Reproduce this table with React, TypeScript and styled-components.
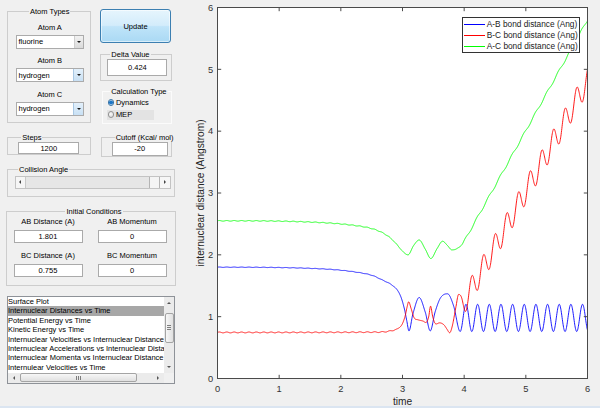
import React from 'react';
import styled, { createGlobalStyle } from 'styled-components';

const GlobalStyle = createGlobalStyle`
  html, body { margin: 0; padding: 0; background: #f0f0f0; }
  body { font-family: "Liberation Sans", Arial, sans-serif; color: #000; }
  *, *::before, *::after { box-sizing: border-box; }
`;

const Window = styled.div`
  display: flex;
  width: 600px;
  height: 408px;
  overflow: hidden;
  background: #f0f0f0;
  border-bottom: 2px solid #dbe5f1;
`;

/* ---------- left control panel ---------- */

const ControlPanel = styled.div`
  flex: none;
  width: 190px;
  padding: 6.5px 0 0 6.5px;
  display: flex;
  flex-direction: column;
  font-size: 7.5px;
  line-height: 9px;
`;

const TwoColumns = styled.div<{ $gap?: number }>`
  display: grid;
  grid-template-columns: 84.5px 72px;
  column-gap: 9px;
  align-items: start;
  margin-top: ${({ $gap = 0 }) => $gap}px;
`;

const RightColumn = styled.div`
  display: flex;
  flex-direction: column;
`;

const Group = styled.fieldset<{ $pad: string; $gap?: number; $light?: boolean; $width?: number; $shift?: number }>`
  margin: ${({ $gap = 0, $shift = 0 }) => `${$gap}px 0 0 ${$shift}px`};
  padding: ${({ $pad }) => $pad};
  min-width: 0;
  width: ${({ $width }) => ($width ? `${$width}px` : 'auto')};
  border: 1px solid ${({ $light }) => ($light ? '#fbfbfb' : '#cdcdcd')};
`;

const Caption = styled.legend<{ $center?: boolean }>`
  padding: 0 1px;
  margin: ${({ $center }) => ($center ? '0 auto' : '0 0 0 3px')};
  font-size: 7.5px;
  line-height: 9px;
  white-space: nowrap;
`;

const AtomList = styled.div`
  display: flex;
  flex-direction: column;
  gap: 7.6px;
`;

const Field = styled.div<{ $gap: number }>`
  display: flex;
  flex-direction: column;
  gap: ${({ $gap }) => $gap}px;
`;

const FieldLabel = styled.div`
  text-align: center;
  line-height: 9px;
  white-space: nowrap;
`;

const Combo = styled.div`
  display: flex;
  height: 14px;
  background: #fff;
  border: 1px solid #ababab;
`;

const ComboText = styled.span`
  flex: 1;
  display: flex;
  align-items: center;
  padding-left: 2px;
`;

const ComboButton = styled.span<{ $hot?: boolean }>`
  flex: none;
  width: ${({ $hot }) => ($hot ? 10 : 9)}px;
  display: flex;
  align-items: center;
  justify-content: center;
  background: ${({ $hot }) => ($hot ? 'linear-gradient(#e3f0fb, #c8e0f4)' : 'linear-gradient(#f2f2f2, #dadada)')};
  border-left: 1px solid ${({ $hot }) => ($hot ? '#a9c8e4' : '#cfcfcf')};
`;

type Dir = 'up' | 'down' | 'left' | 'right';

const Arrow = styled.span<{ $dir: Dir; $size?: number; $color?: string }>`
  width: 0;
  height: 0;
  ${({ $dir, $size = 2.5, $color = '#1a1a1a' }) => {
    const s = $size;
    const l = s * 1.2;
    if ($dir === 'down') return `border-left:${s}px solid transparent;border-right:${s}px solid transparent;border-top:${l}px solid ${$color};`;
    if ($dir === 'up') return `border-left:${s}px solid transparent;border-right:${s}px solid transparent;border-bottom:${l}px solid ${$color};`;
    if ($dir === 'left') return `border-top:${s}px solid transparent;border-bottom:${s}px solid transparent;border-right:${l}px solid ${$color};`;
    return `border-top:${s}px solid transparent;border-bottom:${s}px solid transparent;border-left:${l}px solid ${$color};`;
  }}
`;

const UpdateButton = styled.button`
  display: block;
  width: 71px;
  height: 34px;
  margin: 2.5px 0 0;
  padding: 0;
  border: 1px solid #3c7fb1;
  border-radius: 3px;
  background: linear-gradient(180deg, #e6f5fd 0%, #d3ecfb 48%, #bfe4f9 52%, #aad9f4 100%);
  box-shadow: inset 0 0 0 1px rgba(255, 255, 255, 0.55);
  font: 7.5px "Liberation Sans", Arial, sans-serif;
  color: #000;
`;

const Edit = styled.div<{ $w: number; $h: number }>`
  width: ${({ $w }) => $w}px;
  height: ${({ $h }) => $h}px;
  display: flex;
  align-items: center;
  justify-content: center;
  background: #fff;
  border: 1px solid #aaaaaa;
`;

const RadioList = styled.div`
  display: flex;
  flex-direction: column;
  gap: 2px;
`;

const RadioRow = styled.div<{ $shaded?: boolean }>`
  display: flex;
  align-items: center;
  gap: 1.6px;
  width: 46.6px;
  height: 10px;
  padding-left: 0.6px;
  background: ${({ $shaded }) => ($shaded ? '#e3e3e3' : 'transparent')};
`;

const RadioDot = styled.span<{ $on?: boolean }>`
  flex: none;
  width: 6.5px;
  height: 6.5px;
  border-radius: 50%;
  border: 1px solid ${({ $on }) => ($on ? '#3b75a6' : '#939393')};
  background: ${({ $on }) =>
    $on
      ? 'radial-gradient(circle, #1c76c6 0 1.5px, #5fa2dc 1.9px, #e9f2fa 2.3px)'
      : 'radial-gradient(circle at 40% 40%, #fbfbfb, #d3d3d3)'};
`;

const Slider = styled.div`
  display: flex;
  width: 156px;
  height: 13px;
  border: 1px solid #c3c3c3;
  background: #e6e6e6;
`;

const SliderButton = styled.div<{ $side: 'left' | 'right' }>`
  flex: none;
  width: ${({ $side }) => ($side === 'left' ? 9.5 : 10.5)}px;
  display: flex;
  align-items: center;
  justify-content: center;
  background: #f6f6f6;
  border-right: ${({ $side }) => ($side === 'left' ? '1px solid #c9c9c9' : 'none')};
`;

const SliderTrack = styled.div`
  flex: 1;
`;

const SliderThumb = styled.div`
  flex: none;
  width: 11px;
  background: #f4f4f4;
  border-left: 1px solid #b4b4b4;
  border-right: 1px solid #b4b4b4;
`;

const ConditionsGrid = styled.div`
  display: grid;
  grid-template-columns: 69px 69px;
  column-gap: 15px;
  row-gap: 8.5px;
`;

const ListBox = styled.div`
  margin-top: 10px;
  width: 168.5px;
  height: 88px;
  border: 1px solid #8e9298;
  background: #fff;
  display: grid;
  grid-template-columns: 1fr 10px;
  grid-template-rows: 1fr 10px;
`;

const ListItems = styled.div`
  overflow: hidden;
`;

const ListItem = styled.div<{ $selected?: boolean }>`
  height: 9.4px;
  line-height: 9.4px;
  padding-left: 0.5px;
  white-space: nowrap;
  background: ${({ $selected }) => ($selected ? '#a7a7a7' : 'transparent')};
`;

const ScrollBar = styled.div<{ $vertical?: boolean }>`
  display: flex;
  flex-direction: ${({ $vertical }) => ($vertical ? 'column' : 'row')};
  background: #ebebeb;
`;

const ScrollButton = styled.div<{ $vertical?: boolean }>`
  flex: none;
  ${({ $vertical }) => ($vertical ? 'height: 12px;' : 'width: 12px;')}
  display: flex;
  align-items: center;
  justify-content: center;
`;

const ScrollTrack = styled.div<{ $vertical?: boolean }>`
  flex: 1;
  display: flex;
  flex-direction: ${({ $vertical }) => ($vertical ? 'column' : 'row')};
  padding: ${({ $vertical }) => ($vertical ? '3.7px 0.5px 0' : '0.5px 0')};
`;

const ScrollThumb = styled.div<{ $vertical?: boolean; $len: number }>`
  flex: none;
  ${({ $vertical, $len }) => ($vertical ? `height: ${$len}px;` : `width: ${$len}px;`)}
  display: flex;
  align-items: center;
  justify-content: center;
  border: 1px solid #a4a4a4;
  border-radius: 2px;
  background: ${({ $vertical }) =>
    $vertical ? 'linear-gradient(90deg, #f7f7f7, #e0e0e0)' : 'linear-gradient(180deg, #f7f7f7, #e0e0e0)'};
`;

const Grip = styled.span<{ $vertical?: boolean }>`
  ${({ $vertical }) =>
    $vertical
      ? 'width: 4px; height: 5px; background: repeating-linear-gradient(180deg, #7d7d7d 0 1px, transparent 1px 2px);'
      : 'width: 5px; height: 4px; background: repeating-linear-gradient(90deg, #7d7d7d 0 1px, transparent 1px 2px);'}
`;

const ScrollCorner = styled.div`
  background: #f0f0f0;
`;

/* ---------- plot ---------- */

const PlotArea = styled.div`
  position: relative;
  flex: 1;
`;

const Chart = styled.svg`
  display: block;
  font-family: "Liberation Sans", Arial, sans-serif;
`;

const LegendBox = styled.div`
  position: absolute;
  top: 16.5px;
  right: 20px;
  width: 118.5px;
  padding: 1px 2px 0 1.3px;
  background: #fff;
  border: 1px solid #333;
  font-size: 8.3px;
  color: #1a1a1a;
`;

const LegendRow = styled.div`
  display: flex;
  align-items: center;
  gap: 2px;
  height: 11.2px;
  white-space: nowrap;
`;

const LegendSwatch = styled.span<{ $color: string }>`
  flex: none;
  width: 21px;
  height: 1px;
  background: ${({ $color }) => $color};
`;

/* ---------- data ---------- */

const X0 = 27.5;
const X1 = 397.5;
const Y0 = 7.5;
const Y1 = 378.5;
const tToX = (t: number) => X0 + (t / 6) * (X1 - X0);
const vToY = (v: number) => Y1 - (v / 6) * (Y1 - Y0);

type Key = [number, number, number?];

const spline = (keys: Key[]) => {
  const slopes = keys.map((k, i) => {
    if (k[2] !== undefined) return k[2];
    const a = keys[Math.max(0, i - 1)];
    const b = keys[Math.min(keys.length - 1, i + 1)];
    return (b[1] - a[1]) / (b[0] - a[0]);
  });
  return (t: number) => {
    let i = 0;
    while (i < keys.length - 2 && t > keys[i + 1][0]) i++;
    const [t0, v0] = keys[i];
    const [t1, v1] = keys[i + 1];
    const h = t1 - t0;
    const s = Math.min(1, Math.max(0, (t - t0) / h));
    const s2 = s * s;
    const s3 = s2 * s;
    return (
      (2 * s3 - 3 * s2 + 1) * v0 +
      (s3 - 2 * s2 + s) * h * slopes[i] +
      (-2 * s3 + 3 * s2) * v1 +
      (s3 - s2) * h * slopes[i + 1]
    );
  };
};

const slopeOf = (f: (t: number) => number, t: number) => (f(t + 0.0005) - f(t - 0.0005)) / 0.001;

const PERIOD = 0.189;
const T_OSC = 3.935;
const RED_JOIN = 3.96;
const GREEN_JOIN = 3.99;
const phase = (t: number) => (2 * Math.PI * (t - T_OSC)) / PERIOD;
const redBase = (t: number) => 2.17 + 1.79 * (t - 4.52);
const blueLate = (t: number) => 0.98 - 0.22 * Math.cos(phase(t));
const redLate = (t: number) => redBase(t) + 0.2 * Math.cos(phase(t));
const greenLate = (t: number) => 0.98 + redBase(t) - 0.018 * Math.cos(phase(t) + 0.4);

const blueEarly = spline([
  [0, 1.8, 0], [0.8, 1.797], [1.4, 1.785], [1.9, 1.76], [2.25, 1.72], [2.5, 1.67], [2.68, 1.59],
  [2.8, 1.53], [2.9, 1.45], [2.97, 1.33], [3.03, 1.13], [3.07, 0.93], [3.105, 0.77, 0], [3.17, 1.05],
  [3.27, 1.31, 0], [3.37, 1.07], [3.45, 0.77, 0], [3.53, 1.08], [3.62, 1.31], [3.73, 1.37, 0],
  [3.83, 1.17], [T_OSC, 0.76, 0],
]);

const redEarly = spline([
  [0, 0.745, 0], [2.6, 0.75], [2.75, 0.76], [2.85, 0.78], [2.93, 0.81], [2.99, 0.87], [3.04, 1.0],
  [3.075, 1.16], [3.1, 1.24, 0], [3.14, 1.13], [3.19, 0.98], [3.25, 0.95], [3.33, 0.93], [3.39, 0.91],
  [3.425, 1.0], [3.455, 1.17, 0], [3.49, 1.0], [3.53, 0.89], [3.6, 0.9, 0], [3.67, 0.87], [3.72, 0.8],
  [3.765, 0.74, 0], [3.81, 0.86], [3.865, 1.15], [3.91, 1.36, 0], [RED_JOIN, redLate(RED_JOIN), slopeOf(redLate, RED_JOIN)],
]);

const greenEarly = spline([
  [0, 2.55, 0], [1.0, 2.545], [1.8, 2.515], [2.3, 2.465], [2.55, 2.41], [2.74, 2.32], [2.88, 2.2],
  [2.99, 2.07], [3.09, 2.0, 0], [3.18, 2.15], [3.27, 2.24, 0], [3.37, 2.09], [3.46, 1.94, 0], [3.56, 2.1],
  [3.65, 2.22, 0], [3.73, 2.15], [3.8, 2.08, 0], [3.88, 2.1],
  [GREEN_JOIN, greenLate(GREEN_JOIN), slopeOf(greenLate, GREEN_JOIN)],
]);

const ripple = (t: number) => Math.sin((2 * Math.PI * t) / 0.12) * (t < 2.85 ? 1 : Math.max(0, 1 - (t - 2.85) / 0.1));

const blue = (t: number) => (t < T_OSC ? blueEarly(t) : blueLate(t)) + 0.003 * ripple(t);
const red = (t: number) => (t < RED_JOIN ? redEarly(t) : redLate(t)) + 0.007 * ripple(t);
const green = (t: number) => (t < GREEN_JOIN ? greenEarly(t) : greenLate(t)) + 0.005 * ripple(t);

const toPath = (f: (t: number) => number) => {
  const n = 1500;
  let d = '';
  for (let i = 0; i <= n; i++) {
    const t = (i / n) * 6;
    d += `${i ? 'L' : 'M'}${tToX(t).toFixed(2)},${vToY(f(t)).toFixed(2)}`;
  }
  return d;
};

const TICKS = [0, 1, 2, 3, 4, 5, 6];
const tickPath = TICKS.map((k) => {
  const x = tToX(k).toFixed(2);
  const y = vToY(k).toFixed(2);
  return `M${x},${Y1}v-3.7M${x},${Y0}v3.7M${X0},${y}h3.7M${X1},${y}h-3.7`;
}).join('');

const series = [
  { name: 'A-B bond distance (Ang)', color: '#0000ff', d: toPath(blue) },
  { name: 'B-C bond distance (Ang)', color: '#ff0000', d: toPath(red) },
  { name: 'A-C bond distance (Ang)', color: '#00ff00', d: toPath(green) },
];

const plots = [
  'Surface Plot',
  'Internuclear Distances vs Time',
  'Potential Energy vs Time',
  'Kinetic Energy vs Time',
  'Internuclear Velocities vs Internuclear Distance',
  'Internuclear Accelerations vs Internuclear Distance',
  'Internuclear Momenta vs Internuclear Distance',
  'Internulear Velocities vs Time',
];

const atoms = [
  { label: 'Atom A', value: 'fluorine', hot: false },
  { label: 'Atom B', value: 'hydrogen', hot: true },
  { label: 'Atom C', value: 'hydrogen', hot: true },
];

const conditions = [
  { label: 'AB Distance (A)', value: '1.801' },
  { label: 'AB Momentum', value: '0' },
  { label: 'BC Distance (A)', value: '0.755' },
  { label: 'BC Momentum', value: '0' },
];

export default function App() {
  return (
    <>
      <GlobalStyle />
      <Window>
        <ControlPanel>
          <TwoColumns>
            <Group $pad="7px 6px 6.3px 8px">
              <Caption $center>Atom Types</Caption>
              <AtomList>
                {atoms.map((a) => (
                  <Field key={a.label} $gap={3}>
                    <FieldLabel>{a.label}</FieldLabel>
                    <Combo>
                      <ComboText>{a.value}</ComboText>
                      <ComboButton $hot={a.hot}>
                        <Arrow $dir="down" $size={2.3} />
                      </ComboButton>
                    </Combo>
                  </Field>
                ))}
              </AtomList>
            </Group>
            <RightColumn>
              <UpdateButton>Update</UpdateButton>
              <Group $pad="0 3px 4px 6.3px" $gap={7}>
                <Caption>Delta Value</Caption>
                <Edit $w={60.2} $h={17}>0.424</Edit>
              </Group>
              <Group $pad="2px 3px 3.5px 4.7px" $gap={5.5} $light $shift={1.5}>
                <Caption>Calculation Type</Caption>
                <RadioList>
                  <RadioRow>
                    <RadioDot $on />
                    Dynamics
                  </RadioRow>
                  <RadioRow $shaded>
                    <RadioDot />
                    MEP
                  </RadioRow>
                </RadioList>
              </Group>
            </RightColumn>
          </TwoColumns>

          <TwoColumns $gap={8.5}>
            <Group $pad="0.5px 0 0 10.8px">
              <Caption>Steps</Caption>
              <Edit $w={61} $h={12}>1200</Edit>
            </Group>
            <Group $pad="0.2px 0 0 9.7px" $shift={1}>
              <Caption>Cutoff (Kcal/ mol)</Caption>
              <Edit $w={56} $h={14.3}>-20</Edit>
            </Group>
          </TwoColumns>

          <Group $pad="1.5px 0 7px 7.5px" $gap={8.5} $width={168.5}>
            <Caption>Collision Angle</Caption>
            <Slider>
              <SliderButton $side="left">
                <Arrow $dir="left" $size={2} $color="#444" />
              </SliderButton>
              <SliderTrack />
              <SliderThumb />
              <SliderButton $side="right">
                <Arrow $dir="right" $size={2} $color="#444" />
              </SliderButton>
            </Slider>
          </Group>

          <Group $pad="1px 0 8px 6.5px" $gap={10.5} $width={169.5} $shift={-0.5}>
            <Caption $center>Initial Conditions</Caption>
            <ConditionsGrid>
              {conditions.map((c) => (
                <Field key={c.label} $gap={3.5}>
                  <FieldLabel>{c.label}</FieldLabel>
                  <Edit $w={69} $h={13}>{c.value}</Edit>
                </Field>
              ))}
            </ConditionsGrid>
          </Group>

          <ListBox>
            <ListItems>
              {plots.map((p, i) => (
                <ListItem key={p} $selected={i === 1}>
                  {p}
                </ListItem>
              ))}
            </ListItems>
            <ScrollBar $vertical>
              <ScrollButton $vertical>
                <Arrow $dir="up" $size={2} $color="#555" />
              </ScrollButton>
              <ScrollTrack $vertical>
                <ScrollThumb $vertical $len={30}>
                  <Grip $vertical />
                </ScrollThumb>
              </ScrollTrack>
              <ScrollButton $vertical>
                <Arrow $dir="down" $size={2} $color="#555" />
              </ScrollButton>
            </ScrollBar>
            <ScrollBar>
              <ScrollButton>
                <Arrow $dir="left" $size={2} $color="#555" />
              </ScrollButton>
              <ScrollTrack>
                <ScrollThumb $len={117.7}>
                  <Grip />
                </ScrollThumb>
              </ScrollTrack>
              <ScrollButton>
                <Arrow $dir="right" $size={2} $color="#555" />
              </ScrollButton>
            </ScrollBar>
            <ScrollCorner />
          </ListBox>
        </ControlPanel>

        <PlotArea>
          <Chart width={410} height={406} viewBox="0 0 410 406">
            <defs>
              <clipPath id="plot-clip">
                <rect x={X0} y={Y0} width={X1 - X0} height={Y1 - Y0} />
              </clipPath>
            </defs>
            <rect x={X0} y={Y0} width={X1 - X0} height={Y1 - Y0} fill="#fff" />
            <g clipPath="url(#plot-clip)" fill="none" strokeWidth={0.9}>
              {series.map((s) => (
                <path key={s.name} d={s.d} stroke={s.color} />
              ))}
            </g>
            <rect x={X0} y={Y0} width={X1 - X0} height={Y1 - Y0} fill="none" stroke="#4a4a4a" strokeWidth={1} />
            <path d={tickPath} stroke="#4a4a4a" strokeWidth={1} fill="none" />
            <g fontSize={9.3} fill="#333">
              {TICKS.map((k) => (
                <text key={`x${k}`} x={tToX(k)} y={391.6} textAnchor="middle">
                  {k}
                </text>
              ))}
              {TICKS.map((k) => (
                <text key={`y${k}`} x={23.2} y={vToY(k) + 3.3} textAnchor="end">
                  {k}
                </text>
              ))}
            </g>
            <g fontSize={10.2} fill="#262626">
              <text x={(X0 + X1) / 2} y={404.8} textAnchor="middle">
                time
              </text>
              <text transform={`translate(14.2 ${(Y0 + Y1) / 2}) rotate(-90)`} textAnchor="middle">
                internuclear distance (Angstrom)
              </text>
            </g>
          </Chart>
          <LegendBox>
            {series.map((s) => (
              <LegendRow key={s.name}>
                <LegendSwatch $color={s.color} />
                {s.name}
              </LegendRow>
            ))}
          </LegendBox>
        </PlotArea>
      </Window>
    </>
  );
}
